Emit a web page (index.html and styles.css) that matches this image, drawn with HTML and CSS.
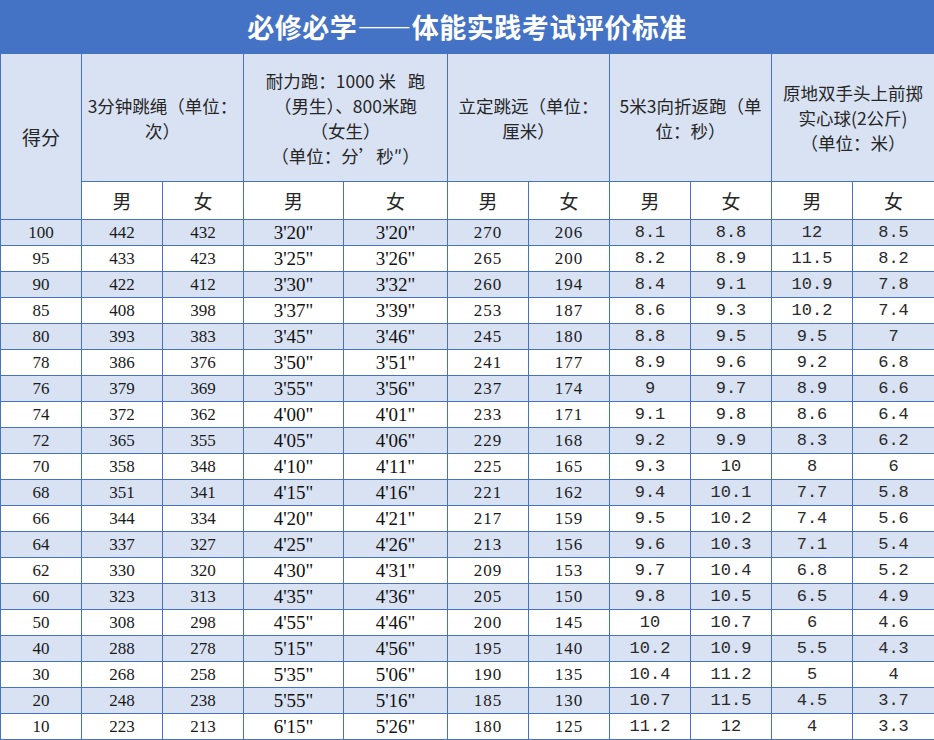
FILE: index.html
```html
<!DOCTYPE html>
<html lang="zh">
<head>
<meta charset="utf-8">
<title>体能实践考试评价标准</title>
<link rel="stylesheet" href="styles.css">
</head>
<body>
<div class="title">必修必学——体能实践考试评价标准</div>
<table class="grid">
<colgroup>
<col class="w81"><col class="w81"><col class="w81"><col class="w100"><col class="w104"><col class="w81"><col class="w81"><col class="w81"><col class="w81"><col class="w81"><col class="w82">
</colgroup>
<thead>
<tr class="hd">
<th rowspan="2" class="score-h">得分</th>
<th colspan="2">3分钟跳绳（单位：<br>次）</th>
<th colspan="2">耐力跑：1000 米&nbsp;&nbsp;&nbsp;跑<br>（男生）、800米跑<br>（女生）<br>（单位：分’秒″）</th>
<th colspan="2">立定跳远（单位：<br>厘米）</th>
<th colspan="2">5米3向折返跑（单<br>位：秒）</th>
<th colspan="2">原地双手头上前掷<br>实心球(2公斤)<br>（单位：米）</th>
</tr>
<tr class="sub">
<th>男</th><th>女</th><th>男</th><th>女</th><th>男</th><th>女</th><th>男</th><th>女</th><th>男</th><th>女</th>
</tr>
</thead>
<tbody>
<tr class="alt"><td>100</td><td>442</td><td>432</td><td class="t">3'20"</td><td class="t">3'20"</td><td class="j">270</td><td class="j">206</td><td class="m">8.1</td><td class="m">8.8</td><td class="m">12</td><td class="m">8.5</td></tr>
<tr><td>95</td><td>433</td><td>423</td><td class="t">3'25"</td><td class="t">3'26"</td><td class="j">265</td><td class="j">200</td><td class="m">8.2</td><td class="m">8.9</td><td class="m">11.5</td><td class="m">8.2</td></tr>
<tr class="alt"><td>90</td><td>422</td><td>412</td><td class="t">3'30"</td><td class="t">3'32"</td><td class="j">260</td><td class="j">194</td><td class="m">8.4</td><td class="m">9.1</td><td class="m">10.9</td><td class="m">7.8</td></tr>
<tr><td>85</td><td>408</td><td>398</td><td class="t">3'37"</td><td class="t">3'39"</td><td class="j">253</td><td class="j">187</td><td class="m">8.6</td><td class="m">9.3</td><td class="m">10.2</td><td class="m">7.4</td></tr>
<tr class="alt"><td>80</td><td>393</td><td>383</td><td class="t">3'45"</td><td class="t">3'46"</td><td class="j">245</td><td class="j">180</td><td class="m">8.8</td><td class="m">9.5</td><td class="m">9.5</td><td class="m">7</td></tr>
<tr><td>78</td><td>386</td><td>376</td><td class="t">3'50"</td><td class="t">3'51"</td><td class="j">241</td><td class="j">177</td><td class="m">8.9</td><td class="m">9.6</td><td class="m">9.2</td><td class="m">6.8</td></tr>
<tr class="alt"><td>76</td><td>379</td><td>369</td><td class="t">3'55"</td><td class="t">3'56"</td><td class="j">237</td><td class="j">174</td><td class="m">9</td><td class="m">9.7</td><td class="m">8.9</td><td class="m">6.6</td></tr>
<tr><td>74</td><td>372</td><td>362</td><td class="t">4'00"</td><td class="t">4'01"</td><td class="j">233</td><td class="j">171</td><td class="m">9.1</td><td class="m">9.8</td><td class="m">8.6</td><td class="m">6.4</td></tr>
<tr class="alt"><td>72</td><td>365</td><td>355</td><td class="t">4'05"</td><td class="t">4'06"</td><td class="j">229</td><td class="j">168</td><td class="m">9.2</td><td class="m">9.9</td><td class="m">8.3</td><td class="m">6.2</td></tr>
<tr><td>70</td><td>358</td><td>348</td><td class="t">4'10"</td><td class="t">4'11"</td><td class="j">225</td><td class="j">165</td><td class="m">9.3</td><td class="m">10</td><td class="m">8</td><td class="m">6</td></tr>
<tr class="alt"><td>68</td><td>351</td><td>341</td><td class="t">4'15"</td><td class="t">4'16"</td><td class="j">221</td><td class="j">162</td><td class="m">9.4</td><td class="m">10.1</td><td class="m">7.7</td><td class="m">5.8</td></tr>
<tr><td>66</td><td>344</td><td>334</td><td class="t">4'20"</td><td class="t">4'21"</td><td class="j">217</td><td class="j">159</td><td class="m">9.5</td><td class="m">10.2</td><td class="m">7.4</td><td class="m">5.6</td></tr>
<tr class="alt"><td>64</td><td>337</td><td>327</td><td class="t">4'25"</td><td class="t">4'26"</td><td class="j">213</td><td class="j">156</td><td class="m">9.6</td><td class="m">10.3</td><td class="m">7.1</td><td class="m">5.4</td></tr>
<tr><td>62</td><td>330</td><td>320</td><td class="t">4'30"</td><td class="t">4'31"</td><td class="j">209</td><td class="j">153</td><td class="m">9.7</td><td class="m">10.4</td><td class="m">6.8</td><td class="m">5.2</td></tr>
<tr class="alt"><td>60</td><td>323</td><td>313</td><td class="t">4'35"</td><td class="t">4'36"</td><td class="j">205</td><td class="j">150</td><td class="m">9.8</td><td class="m">10.5</td><td class="m">6.5</td><td class="m">4.9</td></tr>
<tr><td>50</td><td>308</td><td>298</td><td class="t">4'55"</td><td class="t">4'46"</td><td class="j">200</td><td class="j">145</td><td class="m">10</td><td class="m">10.7</td><td class="m">6</td><td class="m">4.6</td></tr>
<tr class="alt"><td>40</td><td>288</td><td>278</td><td class="t">5'15"</td><td class="t">4'56"</td><td class="j">195</td><td class="j">140</td><td class="m">10.2</td><td class="m">10.9</td><td class="m">5.5</td><td class="m">4.3</td></tr>
<tr><td>30</td><td>268</td><td>258</td><td class="t">5'35"</td><td class="t">5'06"</td><td class="j">190</td><td class="j">135</td><td class="m">10.4</td><td class="m">11.2</td><td class="m">5</td><td class="m">4</td></tr>
<tr class="alt"><td>20</td><td>248</td><td>238</td><td class="t">5'55"</td><td class="t">5'16"</td><td class="j">185</td><td class="j">130</td><td class="m">10.7</td><td class="m">11.5</td><td class="m">4.5</td><td class="m">3.7</td></tr>
<tr><td>10</td><td>223</td><td>213</td><td class="t">6'15"</td><td class="t">5'26"</td><td class="j">180</td><td class="j">125</td><td class="m">11.2</td><td class="m">12</td><td class="m">4</td><td class="m">3.3</td></tr>
</tbody>
</table>
</body>
</html>
```

FILE: styles.css
```css
html, body {
  margin: 0;
  padding: 0;
  background: #ffffff;
}

body {
  width: 934px;
  font-family: "Liberation Serif", "Noto Sans CJK SC", serif;
  color: #1a1a1a;
}

.title {
  height: 53px;
  background: #4472c4;
  color: #ffffff;
  font-family: "Noto Sans CJK SC", sans-serif;
  font-weight: 700;
  font-size: 27px;
  line-height: 53px;
  text-align: center;
  letter-spacing: 0.5px;
}

.grid {
  width: 934px;
  border-collapse: collapse;
  table-layout: fixed;
}

.w81 { width: 81px; }
.w82 { width: 82px; }
.w100 { width: 100px; }
.w104 { width: 104px; }

.grid th,
.grid td {
  border: 1px solid #4472c4;
  padding: 0;
  text-align: center;
  vertical-align: middle;
  overflow: hidden;
  white-space: nowrap;
}

.grid th {
  font-family: "Noto Sans CJK SC", sans-serif;
  font-weight: 400;
  color: #262626;
}

.hd th {
  height: 127px;
  background: #d9e2f3;
  font-size: 17.5px;
  line-height: 25px;
}

.hd th.score-h {
  font-size: 19px;
}

.sub th {
  height: 37px;
  background: #ffffff;
  font-size: 19px;
  line-height: 22px;
}

.grid td {
  height: 25px;
  font-size: 17px;
  line-height: 20px;
}

.grid td.t {
  font-size: 19px;
  color: #111111;
}

.grid td.j {
  font-size: 17px;
  letter-spacing: 1px;
}

.grid td.m {
  font-family: "Liberation Mono", monospace;
  font-size: 17px;
  font-weight: 400;
  color: #2a2a2a;
}

.alt td {
  background: #d9e2f3;
}
```
